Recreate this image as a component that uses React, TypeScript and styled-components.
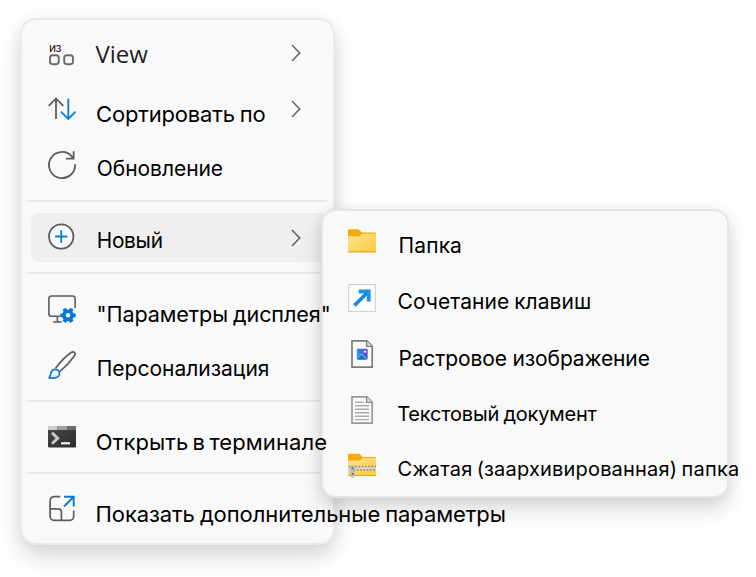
import { ReactNode } from 'react';
import styled, { createGlobalStyle } from 'styled-components';

interface ItemType {
  key: string;
  name: string;
  icon: ReactNode;
  size: number;
  left: number;
  drop: number;
  spacing?: number;
  wordSpacing?: number;
  latin?: boolean;
  arrow?: boolean;
  active?: boolean;
}

const ViewIcon = () => (
  <Icon viewBox="0 0 28 28" fill="none" stroke="#6b6b6b" strokeWidth="1.9">
    <rect x="2" y="16.2" width="8.8" height="9" rx="2.6" />
    <rect x="16.2" y="16.2" width="8.8" height="9" rx="2.6" />
    <text x="1" y="13" fontFamily="Inter, sans-serif" fontSize="12" letterSpacing="-0.6" fill="#2a0d08" stroke="none">
      из
    </text>
  </Icon>
);

const SortIcon = () => (
  <Icon viewBox="0 0 28 28" fill="none" strokeWidth="1.8">
    <path d="M8 24V3.6M0.7 10.8L8 3.5l7.3 7.3" stroke="#5c5c5c" />
    <path d="M20.3 3.6v20.2M12.9 16.6l7.4 7.3 7.3-7.3" stroke="#0a7bd6" />
  </Icon>
);

const RefreshIcon = () => (
  <Icon viewBox="0 0 28 28" fill="none" stroke="#5c5c5c" strokeWidth="1.8">
    <path d="M27.1 13.2A13.1 13.1 0 1 1 23.6 5.1L25.4 7.6" />
    <path d="M25.6 0.2v7.4h-7.6" />
  </Icon>
);

const PlusIcon = () => (
  <Icon viewBox="0 0 28 28" fill="none" strokeWidth="1.8">
    <circle cx="13.2" cy="12.5" r="12.2" fill="#f9f9f9" stroke="#5c5c5c" />
    <path d="M7 12.5h12.4M13.2 6.3v12.4" stroke="#0a7bd6" />
  </Icon>
);

const DisplayIcon = () => (
  <Icon viewBox="0 0 28 28" fill="none" strokeWidth="1.6" stroke="#5c5c5c">
    <path d="M27.1 13V3.6A2.6 2.6 0 0 0 24.5 1H3.4A2.6 2.6 0 0 0 .9 3.6v15.2a2.6 2.6 0 0 0 2.5 2.5h8.6M9.4 21.3v5.5M5.2 27h8.6" />
    <g stroke="#0078d4">
      <path d="M12.3 20.3h15.4M16.150 13.630l7.700 13.340M23.850 13.630l-7.700 13.340" strokeWidth="3.8" />
      <circle cx="20" cy="20.3" r="4.1" strokeWidth="3.6" />
    </g>
    <circle cx="20" cy="20.3" r="2.2" fill="#f9f9f9" stroke="none" />
  </Icon>
);

const BrushIcon = () => (
  <Icon viewBox="0 0 28 28" fill="none" strokeWidth="1.7" strokeLinejoin="round">
    <path d="M7.4 17.6C11 12.500 17.500 5.400 23.200 1.500c2.600-1.700 5 .6 3.300 3.200C22.600 10.200 16.600 16.600 11.400 20.800" stroke="#5c5c5c" />
    <path
      d="M1 26.800c2-1.600 1.100-3.800 2.500-6.300 1.400-2.500 4.800-2.900 6.700-1 2 2 1.600 5-.8 6.500-2.500 1.400-5.600 1.400-8.400.8z"
      stroke="#0a7bd6"
    />
  </Icon>
);

const TerminalIcon = () => (
  <Icon viewBox="0 0 28 28">
    <defs>
      <linearGradient id="terminal" x1="0" y1="0" x2="1" y2="1">
        <stop offset="0" stopColor="#4a4a4a" />
        <stop offset="1" stopColor="#2b2b2b" />
      </linearGradient>
    </defs>
    <rect y="3" width="28" height="21.4" rx="1.2" fill="url(#terminal)" />
    <path d="M0 7V4.2Q0 3 1.2 3H9.500v4z" fill="#d0d0d0" />
    <path d="M9.500 3H19v4H9.500z" fill="#a0a0a0" />
    <path d="M19 3h7.800Q28 3 28 4.200V7h-9z" fill="#6c6c6c" />
    <path d="M4 9.700l5.600 5.500L4 20.700" fill="none" stroke="#c9c9c9" strokeWidth="3" />
    <path d="M13 20.300h9" stroke="#f4f4f4" strokeWidth="2.2" />
  </Icon>
);

const MoreIcon = () => (
  <Icon viewBox="0 0 28 28" fill="none" strokeWidth="1.7">
    <path
      d="M12.3 1.700H6A3.900 3.900 0 0 0 2.100 5.600v15.800A3.900 3.900 0 0 0 6 25.300h15.800a3.900 3.900 0 0 0 3.900-3.900v-6M2.100 13.900h8.200a3.100 3.100 0 0 1 3.100 3.100v8.300"
      stroke="#5c5c5c"
    />
    <path d="M16 1.800h9.700v9.800M25.500 2L16 11.500" stroke="#0a7bd6" strokeWidth="1.9" />
  </Icon>
);

const FolderIcon = () => (
  <Icon viewBox="0 0 28 28">
    <defs>
      <linearGradient id="folder" x1="0" y1="0" x2="1" y2="1">
        <stop offset="0" stopColor="#ffe596" />
        <stop offset="1" stopColor="#fdc83a" />
      </linearGradient>
    </defs>
    <path d="M0 2.500Q0 1.200 1.300 1.200H10.500L14 4.600H26.500Q28 4.600 28 6V22H0z" fill="#f2ad0c" />
    <path d="M0 8.200H11.500L14.400 5.700H28V23Q28 24.400 26.500 24.400H1.500Q0 24.400 0 23z" fill="url(#folder)" />
    <path d="M0 23.800H28" stroke="#dda52c" strokeWidth="1" />
  </Icon>
);

const ShortcutIcon = () => (
  <Icon viewBox="0 0 28 28">
    <rect x=".6" y=".6" width="26.8" height="26.8" fill="#fdfdff" stroke="#cfd3e2" strokeWidth="1.2" />
    <path d="M6.400 21.600L19 9" stroke="#1388dc" strokeWidth="3.6" fill="none" />
    <path d="M10.800 5.500H22.700V17.400H18.800V9.600H10.800z" fill="#1c92e2" />
  </Icon>
);

const ImageIcon = () => (
  <Icon viewBox="0 0 28 28">
    <defs>
      <linearGradient id="image" x1="0" y1="0" x2="1" y2="0">
        <stop offset="0" stopColor="#2697e4" />
        <stop offset="1" stopColor="#5a45c4" />
      </linearGradient>
    </defs>
    <path d="M4 .8H18.800L24.200 6.200V27.200H4z" fill="#fafafa" stroke="#7c7c7c" strokeWidth="1.7" />
    <path d="M18.600.8V6.400H24.200" fill="#ddd" stroke="#7c7c7c" strokeWidth="1.3" />
    <rect x="8.800" y="8.800" width="10.800" height="10.800" rx="1" fill="url(#image)" />
    <path d="M8.800 17.500l4.600-4.300 6.200 6.400H9.800z" fill="#4db8f4" />
    <path d="M9 18.700l4.500-3.600 4.500 4.500H9.800z" fill="#1270cf" />
    <circle cx="17" cy="11.600" r="1.2" fill="#f2f2ff" />
  </Icon>
);

const TextIcon = () => (
  <Icon viewBox="0 0 28 28">
    <path d="M4 .8H18.800L24.200 6.200V27.200H4z" fill="#fafafa" stroke="#9a9a9a" strokeWidth="1.7" />
    <path d="M18.600.8V6.400H24.200" fill="#ddd" stroke="#8a8a8a" strokeWidth="1.3" />
    <path
      d="M7 6.300h8.500M7 9.800h14M7 13.300h14M7 16.800h14M7 20.300h14M7 23.600h14"
      stroke="#adadad"
      strokeWidth="1.4"
    />
  </Icon>
);

const ZipIcon = () => (
  <Icon viewBox="0 0 28 28">
    <path d="M0 3Q0 1.800 1.300 1.800H11.500L14.500 5H26.500Q28 5 28 6.400V22H0z" fill="#f2ad0c" />
    <path d="M0 8.400H12L14.800 6H28V22.600Q28 24 26.500 24H1.500Q0 24 0 22.600z" fill="url(#folder)" />
    <path d="M0 23.500H28" stroke="#dda52c" strokeWidth="1" />
    <path d="M0 16.200H28" stroke="#e2d6b8" strokeWidth="4" />
    <path d="M1 14.500H28M2.600 17.900H28" stroke="#8d897f" strokeWidth="1.5" strokeDasharray="1.7 1.5" />
    <rect x="2.200" y="13.400" width="4.600" height="12" rx="1.4" fill="#bdbdbd" />
    <path d="M3.800 16.200h1.600M3.800 22h1.600" stroke="#666" strokeWidth="2" />
  </Icon>
);

const menuGroups: ItemType[][] = [
  [
    { key: 'view', name: 'View', icon: <ViewIcon />, size: 24, left: 19.5, drop: 1, latin: true, arrow: true },
    {
      key: 'sort',
      name: 'Сортировать по',
      icon: <SortIcon />,
      size: 22,
      left: 20,
      drop: 5,
      spacing: -0.17,
      wordSpacing: -1,
      arrow: true,
    },
    { key: 'refresh', name: 'Обновление', icon: <RefreshIcon />, size: 21, left: 20.8, drop: 4, spacing: -0.05 },
  ],
  [
    {
      key: 'new',
      name: 'Новый',
      icon: <PlusIcon />,
      size: 20.8,
      left: 20.7,
      drop: 3,
      spacing: -0.25,
      arrow: true,
      active: true,
    },
  ],
  [
    {
      key: 'display',
      name: '"Параметры дисплея"',
      icon: <DisplayIcon />,
      size: 21.6,
      left: 20.5,
      drop: 5,
      spacing: -0.1,
      wordSpacing: -1,
    },
    { key: 'personal', name: 'Персонализация', icon: <BrushIcon />, size: 21, left: 20.7, drop: 4 },
  ],
  [
    {
      key: 'terminal',
      name: 'Открыть в терминале',
      icon: <TerminalIcon />,
      size: 22,
      left: 19.8,
      drop: 5,
      spacing: 0.09,
      wordSpacing: -2,
    },
  ],
  [
    {
      key: 'more',
      name: 'Показать дополнительные параметры',
      icon: <MoreIcon />,
      size: 22,
      left: 19.6,
      drop: 5,
      spacing: -0.09,
      wordSpacing: -1,
    },
  ],
];

const newItems: ItemType[] = [
  { key: 'folder', name: 'Папка', icon: <FolderIcon />, size: 21, left: 22.6, drop: 4, spacing: 0.1 },
  {
    key: 'shortcut',
    name: 'Сочетание клавиш',
    icon: <ShortcutIcon />,
    size: 21,
    left: 21.6,
    drop: 4,
    spacing: 0.05,
    wordSpacing: -1,
  },
  { key: 'image', name: 'Растровое изображение', icon: <ImageIcon />, size: 21, left: 22.4, drop: 5, spacing: -0.12 },
  {
    key: 'text',
    name: 'Текстовый документ',
    icon: <TextIcon />,
    size: 20,
    left: 21.2,
    drop: 4,
    spacing: -0.2,
    wordSpacing: -1,
  },
  {
    key: 'zip',
    name: 'Сжатая (заархивированная) папка',
    icon: <ZipIcon />,
    size: 20,
    left: 21.6,
    drop: 3,
    spacing: 0.19,
    wordSpacing: -1.5,
  },
];

const MenuItem = ({ item }: { item: ItemType }) => (
  <Row $active={item.active}>
    {item.icon}
    <Label
      $size={item.size}
      $left={item.left}
      $drop={item.drop}
      $spacing={item.spacing}
      $wordSpacing={item.wordSpacing}
      $latin={item.latin}
    >
      {item.name}
    </Label>
    {item.arrow && (
      <Chevron viewBox="0 0 10 18">
        <path d="M1 1l7.700 8L1 17" />
      </Chevron>
    )}
  </Row>
);

const App = () => {
  return (
    <Desktop>
      <GlobalStyle />
      <Menu>
        {menuGroups.map((group) => (
          <Group key={group[0].key}>
            {group.map((item) => (
              <MenuItem key={item.key} item={item} />
            ))}
          </Group>
        ))}
        <SubMenu>
          {newItems.map((item) => (
            <MenuItem key={item.key} item={item} />
          ))}
        </SubMenu>
      </Menu>
    </Desktop>
  );
};

const GlobalStyle = createGlobalStyle`
  body {
    margin: 0;
    background: #ffffff;
    overflow: hidden;
  }
`;

const Desktop = styled.div`
  box-sizing: border-box;
  width: 756px;
  height: 577px;
  padding: 18px 20px;
  overflow: hidden;
`;

const Menu = styled.div`
  box-sizing: border-box;
  position: relative;
  width: 315px;
  height: 527px;
  padding: 5px 6px 0 5px;

  background: #f9f9f9;
  border: 2px solid #eaeaea;
  border-radius: 16px;
  box-shadow: 0 12px 22px rgba(0, 0, 0, 0.15), 0 0 14px rgba(0, 0, 0, 0.05);
`;

const Group = styled.div`
  display: flex;
  flex-direction: column;

  & + & {
    margin-top: 7px;
    padding-top: 7px;
    border-top: 2px solid #eaeaea;
  }
`;

const SubMenu = styled.div`
  box-sizing: border-box;
  position: absolute;
  left: 299px;
  top: 189px;
  width: 408px;
  height: 289px;
  padding: 3px 0 3px 4px;

  background: #f9f9f9;
  border: 2px solid #e6e6e6;
  border-radius: 15px;
  box-shadow: 0 12px 20px rgba(0, 0, 0, 0.14), 0 0 14px rgba(0, 0, 0, 0.07);
`;

const Row = styled.div<{ $active?: boolean }>`
  height: 56px;
  padding: 0 26px 0 21px;

  display: flex;
  align-items: center;

  ${(props) =>
    props.$active &&
    `
    height: 49px;
    margin: 4px 0 3px 4px;
    padding-left: 17px;
    background: #efefef;
    border-radius: 7px;
  `}
`;

const Icon = styled.svg`
  flex: none;
  width: 28px;
  height: 28px;
  overflow: visible;
`;

// labels stay above the submenu, long names run over its edge
const Label = styled.span<{
  $size: number;
  $left: number;
  $drop: number;
  $spacing?: number;
  $wordSpacing?: number;
  $latin?: boolean;
}>`
  position: relative;
  z-index: 2;
  flex: none;
  height: 28px;
  margin-left: ${(props) => props.$left}px;
  padding-top: ${(props) => props.$drop * 2}px;

  font-family: ${(props) => (props.$latin ? "'Open Sans', 'Noto Sans'" : "Inter, 'Liberation Sans'")}, sans-serif;
  font-size: ${(props) => props.$size}px;
  line-height: 28px;
  letter-spacing: ${(props) => props.$spacing || 0}px;
  word-spacing: ${(props) => props.$wordSpacing || 0}px;
  white-space: nowrap;
  color: ${(props) => (props.$latin ? '#1f1f1f' : '#000000')};
`;

const Chevron = styled.svg`
  flex: none;
  width: 10px;
  height: 18px;
  margin-left: auto;
  fill: none;
  stroke: #5f5f5f;
  stroke-width: 1.5;
`;

export default App;
